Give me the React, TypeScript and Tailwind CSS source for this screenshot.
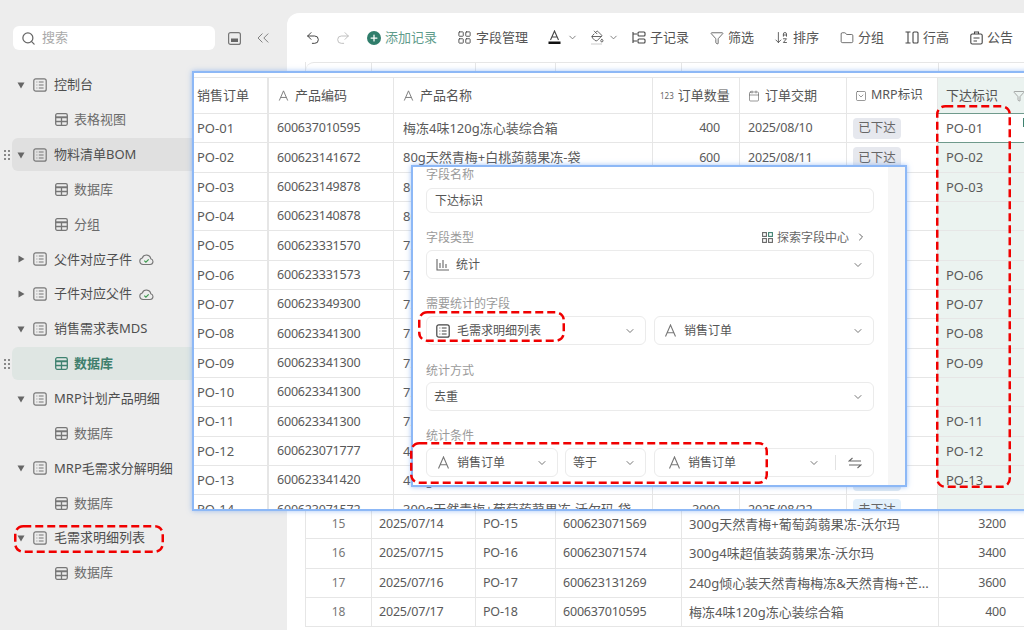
import { ArrowDownAZ, Calendar, ChevronDown, ChevronRight, ChevronsLeft, Folder, Funnel, LayoutGrid, PaintBucket, Plus, Redo2, Search, SquareChevronDown, Undo2 } from "lucide-react"

const FONT = '"Noto Sans", "Noto Sans CJK SC", sans-serif'

const IconDoc = ({ dark = false }: { dark?: boolean }) => (
  <svg width="14" height="14" viewBox="0 0 14 14" fill="none" stroke={dark ? "#444" : "#777"} strokeWidth="1.2" className="shrink-0">
    <rect x="0.8" y="0.8" width="12.4" height="12.4" rx="2" />
    <path d="M3.5 4h.8M3.5 7h.8M3.5 10h.8M5.8 4h4.8M5.8 7h4.8M5.8 10h4.8" />
  </svg>
)

const IconTable = ({ color = "#777" }: { color?: string }) => (
  <svg width="13" height="13" viewBox="0 0 13 13" fill="none" stroke={color} strokeWidth="1.3" className="shrink-0">
    <rect x="0.7" y="0.7" width="11.6" height="11.6" rx="1.5" />
    <path d="M0.7 4.5h11.6M0.7 8.5h11.6M6.5 4.5v7.8" />
    <path d="M1 3.4h11v1.2H1z" fill={color} stroke="none" />
  </svg>
)

const IconCloud = () => (
  <svg width="15" height="13" viewBox="0 0 15 13" fill="none" className="shrink-0">
    <path d="M4 11.5h7.2a2.9 2.9 0 0 0 .6-5.7A4.4 4.4 0 0 0 3.3 5 3.3 3.3 0 0 0 4 11.5z" stroke="#777" strokeWidth="1.1" />
    <path d="M5.3 7.6l1.6 1.5 2.8-2.7" stroke="#3d9a4f" strokeWidth="1.2" />
  </svg>
)

const IconA = ({ color = "#777", size = 13 }: { color?: string; size?: number }) => (
  <svg width={size} height={size} viewBox="0 0 13 13" fill="none" stroke={color} strokeWidth="1.1" className="shrink-0">
    <path d="M1.5 12.5L6.5 1l5 11.5M3.2 8.8h6.6" />
  </svg>
)

const Grip = () => (
  <svg width="6" height="10" viewBox="0 0 6 10" fill="#888" className="absolute left-[4px] top-1/2 -translate-y-1/2">
    <rect x="0" y="0" width="2" height="2" />
    <rect x="4" y="0" width="2" height="2" />
    <rect x="0" y="4" width="2" height="2" />
    <rect x="4" y="4" width="2" height="2" />
    <rect x="0" y="8" width="2" height="2" />
    <rect x="4" y="8" width="2" height="2" />
  </svg>
)

type NavItem = { label: string; sub?: boolean; open?: boolean; cloud?: boolean; hover?: boolean; active?: boolean }

const NAV: NavItem[] = [
  { label: "控制台", open: true },
  { label: "表格视图", sub: true },
  { label: "物料清单BOM", open: true, hover: true },
  { label: "数据库", sub: true },
  { label: "分组", sub: true },
  { label: "父件对应子件", cloud: true },
  { label: "子件对应父件", cloud: true },
  { label: "销售需求表MDS", open: true },
  { label: "数据库", sub: true, active: true },
  { label: "MRP计划产品明细", open: true },
  { label: "数据库", sub: true },
  { label: "MRP毛需求分解明细", open: true },
  { label: "数据库", sub: true },
  { label: "毛需求明细列表", open: true },
  { label: "数据库", sub: true },
]

function NavRow({ item }: { item: NavItem }) {
  const bg = item.active ? "bg-[#dfe6e3]" : item.hover ? "bg-[#e0e0e0]" : ""
  return (
    <div className="relative h-[33px]">
      {(item.hover || item.active) && <Grip />}
      <div className={`ml-[12px] mr-0 flex h-full items-center rounded-md ${bg}`}>
        {item.sub ? (
          <div className="ml-[43px] flex items-center gap-[6px]">
            <IconTable color={item.active ? "#3f8270" : "#777"} />
            <span className={item.active ? "font-semibold text-[#3f7f6d]" : "text-[#6b6b6b]"}>{item.label}</span>
          </div>
        ) : (
          <div className="ml-[5px] flex items-center">
            <svg width="8" height="8" viewBox="0 0 8 8" fill="#666" className="shrink-0">
              {item.open ? <path d="M0.5 1.5h7L4 7.5z" /> : <path d="M1.5 0.5v7L7.5 4z" />}
            </svg>
            <span className="ml-[8px]"><IconDoc /></span>
            <span className="ml-[7px] whitespace-nowrap text-[#4f4f4f]">{item.label}</span>
            {item.cloud && <span className="ml-[7px]"><IconCloud /></span>}
          </div>
        )}
      </div>
    </div>
  )
}

function Sidebar() {
  return (
    <aside className="w-[287px] shrink-0 pt-[26px]">
      <div className="flex items-center">
        <div className="ml-[13px] flex h-[24px] w-[202px] items-center gap-[6px] rounded-md bg-white pl-[8px] text-[#aaa]">
          <Search size={15} className="text-[#666]" />
          <span>搜索</span>
        </div>
        <svg width="13" height="13" viewBox="0 0 13 13" fill="none" className="ml-[13px]">
          <rect x="0.6" y="0.6" width="11.8" height="11.8" rx="2" stroke="#777" strokeWidth="1.2" />
          <rect x="3" y="6.5" width="7" height="3.5" fill="#666" />
        </svg>
        <ChevronsLeft size={20} strokeWidth={1.1} className="ml-[12px] text-[#777]" />
      </div>
      <nav className="mt-[18.5px] flex flex-col gap-[1.87px]">
        {NAV.map((item, i) => (
          <NavRow key={i} item={item} />
        ))}
      </nav>
    </aside>
  )
}

function Tool({ icon, label, className = "" }: { icon: React.ReactNode; label: string; className?: string }) {
  return (
    <div className={`flex items-center gap-[4px] whitespace-nowrap text-[#555] ${className}`}>
      {icon}
      <span>{label}</span>
    </div>
  )
}

function Toolbar() {
  return (
    <div className="flex h-[49px] items-center pl-[18px]">
      <Undo2 size={16} strokeWidth={1.5} className="text-[#444]" />
      <Redo2 size={16} strokeWidth={1.4} className="ml-[14px] text-[#bbb]" />
      <div className="ml-[16px] flex items-center gap-[4px] whitespace-nowrap text-[#5f9c8c]">
        <span className="flex h-[14px] w-[14px] items-center justify-center rounded-full bg-[#2f7d6b]">
          <Plus size={10} strokeWidth={3} className="text-white" />
        </span>
        <span>添加记录</span>
      </div>
      <Tool className="ml-[20px] gap-[3px]" icon={<LayoutGrid size={15} strokeWidth={1.4} className="text-[#444]" />} label="字段管理" />
      <svg width="13" height="15" viewBox="0 0 13 15" fill="none" className="ml-[20px]">
        <path d="M2.5 10L6.5 1l4 9M4 7h5" stroke="#444" strokeWidth="1.1" />
        <rect x="0.5" y="11.5" width="12" height="2.5" fill="#111" />
      </svg>
      <ChevronDown size={11} className="ml-[6px] text-[#777]" />
      <div className="relative ml-[13px] h-[15px] w-[13px]">
        <PaintBucket size={13} strokeWidth={1.5} className="text-[#444]" />
        <div className="absolute bottom-0 left-0 h-[2px] w-[11px] bg-[#e5e5e5]" />
      </div>
      <ChevronDown size={11} className="ml-[4px] text-[#777]" />
      <Tool
        className="ml-[13px]"
        icon={
          <svg width="14" height="13" viewBox="0 0 14 13" fill="none" stroke="#444" strokeWidth="1.1">
            <path d="M1 1v11M1 3h4M1 10h4" />
            <rect x="6" y="1" width="7" height="4" rx="1" />
            <rect x="6" y="8" width="7" height="4" rx="1" />
          </svg>
        }
        label="子记录"
      />
      <Tool className="ml-[21px]" icon={<Funnel size={14} strokeWidth={1.3} className="text-[#444]" />} label="筛选" />
      <Tool className="ml-[20px] gap-[3px]" icon={<ArrowDownAZ size={15} strokeWidth={1.3} className="text-[#444]" />} label="排序" />
      <Tool className="ml-[21px]" icon={<Folder size={14} strokeWidth={1.3} className="text-[#444]" />} label="分组" />
      <Tool
        className="ml-[21px]"
        icon={
          <svg width="14" height="13" viewBox="0 0 14 13" fill="none" stroke="#444" strokeWidth="1.1">
            <path d="M0.5 1h5M0.5 12h5M3 1v11" />
            <rect x="8" y="1" width="5" height="11" rx="1" />
          </svg>
        }
        label="行高"
      />
      <Tool
        className="ml-[21px]"
        icon={
          <svg width="13" height="14" viewBox="0 0 13 14" fill="none" stroke="#444" strokeWidth="1.1">
            <rect x="0.8" y="3" width="11.4" height="10" rx="1.5" />
            <path d="M4.5 3V1h4v2M3.5 7h6M3.5 10h3.5" />
          </svg>
        }
        label="公告"
      />
    </div>
  )
}

const BACK_ROWS = [
  ["15", "2025/07/14", "PO-15", "600623071569", "300g天然青梅+葡萄蒟蒻果冻-沃尔玛", "3200"],
  ["16", "2025/07/15", "PO-16", "600623071574", "300g4味超值装蒟蒻果冻-沃尔玛", "3400"],
  ["17", "2025/07/16", "PO-17", "600623131269", "240g倾心装天然青梅梅冻&天然青梅+芒...", "3600"],
  ["18", "2025/07/17", "PO-18", "600637010595", "梅冻4味120g冻心装综合箱", "400"],
]

const BACK_GRID = "grid grid-cols-[66px_104px_80px_126px_257px_1fr] border-b border-[#e6e6e6]"

function BackTable() {
  return (
    <div className="ml-[18px] border-l border-[#e6e6e6]">
      <div className={`${BACK_GRID} h-[448px] rounded-tl-lg border-t`}>
        {[0, 1, 2, 3, 4].map((i) => (
          <div key={i} className="border-r border-[#e6e6e6]" />
        ))}
      </div>
      {BACK_ROWS.map((r) => (
        <div key={r[0]} className={`${BACK_GRID} h-[29.33px] items-stretch leading-[28px] text-[#5a5a5a]`}>
          <div className="border-r border-[#e6e6e6] text-center text-[12px] text-[#777]">{r[0]}</div>
          <div className="border-r border-[#e6e6e6] pl-[7px] text-[12.5px] tracking-[-0.2px]">{r[1]}</div>
          <div className="border-r border-[#e6e6e6] pl-[7px] text-[12.5px] tracking-[-0.2px]">{r[2]}</div>
          <div className="border-r border-[#e6e6e6] pl-[7px] text-[12.5px] tracking-[-0.2px]">{r[3]}</div>
          <div className="overflow-hidden whitespace-nowrap border-r border-[#e6e6e6] pl-[7px]">{r[4]}</div>
          <div className="pr-[18px] text-right text-[12.5px] tracking-[-0.2px]">{r[5]}</div>
        </div>
      ))}
    </div>
  )
}

type Order = { po: string; code: string; name: string; qty: string; date: string; tag: string; tagBg: string; mark: string }

const tag = (po: string, code: string, name: string, mark = po, qty = "", date = ""): Order => ({
  po,
  code,
  name,
  qty,
  date,
  tag: "",
  tagBg: "",
  mark,
})

const ORDERS: Order[] = [
  { ...tag("PO-01", "600637010595", "梅冻4味120g冻心装综合箱", "PO-01", "400", "2025/08/10"), tag: "已下达", tagBg: "bg-[#e6e8ee]" },
  { ...tag("PO-02", "600623141672", "80g天然青梅+白桃蒟蒻果冻-袋", "PO-02", "600", "2025/08/11"), tag: "已下达", tagBg: "bg-[#e6e8ee]" },
  tag("PO-03", "600623149878", "80g"),
  tag("PO-04", "600623140878", "80g", ""),
  tag("PO-05", "600623331570", "72g", ""),
  tag("PO-06", "600623331573", "72g"),
  tag("PO-07", "600623349300", "72g"),
  tag("PO-08", "600623341300", "72g"),
  tag("PO-09", "600623341300", "72g"),
  tag("PO-10", "600623341300", "72g", ""),
  tag("PO-11", "600623341300", "72g"),
  tag("PO-12", "600623071777", "400g"),
  { ...tag("PO-13", "600623341420", "400g"), tag: " ", tagBg: "bg-[#dde8f3]" },
  { ...tag("PO-14", "600623071572", "300g天然青梅+葡萄蒟蒻果冻-沃尔玛-袋", "", "3000", "2025/08/22"), tag: "未下达", tagBg: "bg-[#e3f0fb]" },
]

const FRONT_GRID = "grid w-[832px] grid-cols-[75px_125px_259px_87px_107px_91px_88px]"

function HeadCell({ icon, label, className = "" }: { icon?: React.ReactNode; label: string; className?: string }) {
  return (
    <div className={`flex items-center whitespace-nowrap border-r border-[#e6e6e6] text-[#555] ${className}`}>
      {icon}
      <span>{label}</span>
    </div>
  )
}

function OrderWindow() {
  return (
    <div className="absolute left-[192px] top-[71px] h-[440px] w-[840px] overflow-hidden border-2 border-[#8db8f6] bg-white shadow-[0_0_5px_rgba(90,150,240,0.55)]">
      <div className="h-[5px] border-b border-[#e6e6e6]" />
      <div className={`${FRONT_GRID} h-[36px] border-b border-[#e6e6e6]`}>
        <HeadCell label="销售订单" className="border-r-2 pl-[3px]" />
        <HeadCell icon={<IconA size={11} />} label="产品编码" className="gap-[6px] pl-[9px]" />
        <HeadCell icon={<IconA size={11} />} label="产品名称" className="gap-[6px] pl-[9px]" />
        <HeadCell icon={<span className="text-[8px] text-[#666]">123</span>} label="订单数量" className="gap-[4px] pl-[7px]" />
        <HeadCell icon={<Calendar size={12} strokeWidth={1.2} />} label="订单交期" className="gap-[5px] pl-[8px]" />
        <HeadCell icon={<SquareChevronDown size={12} strokeWidth={1.2} />} label="MRP标识" className="gap-[4px] pl-[8px] text-[12.5px]" />
        <div className="flex items-center justify-between bg-[#ebf3f0] pl-[8px] text-[#555]">
          <span className="whitespace-nowrap">下达标识</span>
          <Funnel size={12} strokeWidth={1.2} className="mr-[1px] text-[#777]" />
        </div>
      </div>
      {ORDERS.map((o, i) => (
        <div key={o.po} className={`${FRONT_GRID} h-[29.33px] border-b border-[#e6e6e6] text-[#5a5a5a] [&>div]:pt-px`}>
          <div className="flex items-center border-r-2 border-[#e6e6e6] pl-[3px] text-[13px]">{o.po}</div>
          <div className="flex items-center border-r border-[#e6e6e6] pl-[8px] text-[12.5px] tracking-[-0.2px]">{o.code}</div>
          <div className="flex items-center whitespace-nowrap border-r border-[#e6e6e6] pl-[9px]">{o.name}</div>
          <div className="flex items-center justify-end border-r border-[#e6e6e6] pr-[19px] text-[12.5px] tracking-[-0.2px]">{o.qty}</div>
          <div className="flex items-center border-r border-[#e6e6e6] pl-[8px] text-[12.5px] tracking-[-0.2px]">{o.date}</div>
          <div className="flex items-center border-r border-[#e6e6e6] pl-[6px]">
            {o.tag && <span className={`flex h-[21px] w-[48px] items-center justify-center rounded ${o.tagBg} text-[12.5px] text-[#666]`}>{o.tag}</span>}
          </div>
          <div
            className={
              i === 0
                ? "relative -my-px flex items-center border-y border-[#6f9a8c] bg-white pl-[8px] text-[13px]"
                : "flex items-center bg-[#ebf3f0] pl-[8px] text-[13px]"
            }
          >
            {o.mark}
            {i === 0 && <span className="absolute left-[85px] top-[4px] h-[9px] w-[3px] bg-[#3f8270]" />}
          </div>
        </div>
      ))}
    </div>
  )
}

function Box({ children, className = "" }: { children: React.ReactNode; className?: string }) {
  return (
    <div className={`flex h-[29px] items-center rounded-md border border-[#ebebeb] bg-white pr-[9px] text-[#555] ${className}`}>
      <div className="flex min-w-0 flex-1 items-center gap-[7px] whitespace-nowrap [&>span]:pt-px">{children}</div>
      <ChevronDown size={12} className="shrink-0 text-[#777]" />
    </div>
  )
}

const Label = ({ text, className = "" }: { text: string; className?: string }) => (
  <div className={`h-[16px] pt-px leading-[16px] text-[#9a9a9a] ${className}`}>{text}</div>
)

function FieldDialog() {
  return (
    <div className="absolute left-[411px] top-[165px] flex h-[322px] w-[496px] overflow-hidden border-2 border-[#8db8f6] bg-white text-[12px] shadow-[0_0_5px_rgba(90,150,240,0.55)]">
      <div className="min-w-0 flex-1 pl-[13px] pr-[14px]">
        <Label text="字段名称" className="-mt-px" />
        <div className="mt-[6px] flex h-[25px] items-center rounded-md border border-[#ebebeb] pl-[8px] pt-px text-[#555]">下达标识</div>
        <div className="mt-[16px] flex h-[16px] items-center justify-between pr-[7px]">
          <Label text="字段类型" />
          <div className="flex h-[16px] items-center gap-[4px] leading-[16px] text-[#666]">
            <svg width="11" height="11" viewBox="0 0 11 11" fill="none" stroke="#666" strokeWidth="1.1">
              <rect x="0.6" y="0.6" width="3.8" height="3.8" />
              <rect x="0.6" y="6.6" width="3.8" height="3.8" />
              <rect x="6.6" y="6.6" width="3.8" height="3.8" />
              <rect x="6.6" y="0.6" width="3.8" height="3.8" stroke="#3f8270" />
            </svg>
            <span className="pt-px">探索字段中心</span>
            <ChevronRight size={12} className="ml-[2px]" />
          </div>
        </div>
        <Box className="mt-[5px] pl-[9px]">
          <svg width="13" height="13" viewBox="0 0 13 13" fill="none" stroke="#666" strokeWidth="1.1">
            <path d="M1 1v11h12M4 5v5M7 2v8M10 6v4" />
          </svg>
          <span>统计</span>
        </Box>
        <Label text="需要统计的字段" className="mt-[16px]" />
        <div className="mt-[5px] grid grid-cols-[220px_220px] gap-x-[8px]">
          <Box className="pl-[9px]">
            <IconDoc dark />
            <span>毛需求明细列表</span>
          </Box>
          <Box className="pl-[9px]">
            <IconA size={13} />
            <span>销售订单</span>
          </Box>
        </div>
        <Label text="统计方式" className="mt-[17px]" />
        <Box className="mt-[4px] pl-[7px]">
          <span>去重</span>
        </Box>
        <Label text="统计条件" className="mt-[16px]" />
        <div className="mt-[5px] flex">
          <Box className="w-[132px] pl-[10px]">
            <IconA size={13} />
            <span>销售订单</span>
          </Box>
          <Box className="ml-[7px] w-[81px] pl-[7px]">
            <span>等于</span>
          </Box>
          <div className="ml-[8px] flex h-[29px] w-[220px] items-center rounded-md border border-[#ebebeb] pl-[13px] text-[#555]">
            <div className="flex flex-1 items-center gap-[7px] whitespace-nowrap [&>span]:pt-px">
              <IconA size={13} />
              <span>销售订单</span>
            </div>
            <ChevronDown size={12} className="text-[#777]" />
            <div className="ml-[15px] h-[15px] w-px bg-[#e2e2e2]" />
            <svg width="14" height="12" viewBox="0 0 14 12" fill="none" stroke="#666" strokeWidth="1.1" className="ml-[12px] mr-[11px]">
              <path d="M13 4H1l3.5-3M1 8h12l-3.5 3" />
            </svg>
          </div>
        </div>
      </div>
      <div className="w-[17px] shrink-0 bg-[#f6f6f6]" />
    </div>
  )
}

function RedBox({ x, y, w, h }: { x: number; y: number; w: number; h: number }) {
  return (
    <svg width={w} height={h} viewBox={`0 0 ${w} ${h}`} fill="none" className="absolute" style={{ left: x, top: y }}>
      <rect x="1.25" y="1.25" width={w - 2.5} height={h - 2.5} rx="8" stroke="#f00000" strokeWidth="2.5" strokeDasharray="8 4" />
    </svg>
  )
}

export default function App() {
  return (
    <div className="relative flex h-[630px] w-[1024px] overflow-hidden bg-[#ededed] text-[13px]" style={{ fontFamily: FONT }}>
      <Sidebar />
      <main className="mt-[13px] min-w-0 flex-1 rounded-tl-xl bg-white">
        <Toolbar />
        <BackTable />
      </main>
      <OrderWindow />
      <FieldDialog />
      <RedBox x={14} y={525} w={150} h={28} />
      <RedBox x={418} y={311} w={147} h={31} />
      <RedBox x={410} y={442} w={358} h={42} />
      <RedBox x={936} y={105} w={75} h={383} />
    </div>
  )
}
